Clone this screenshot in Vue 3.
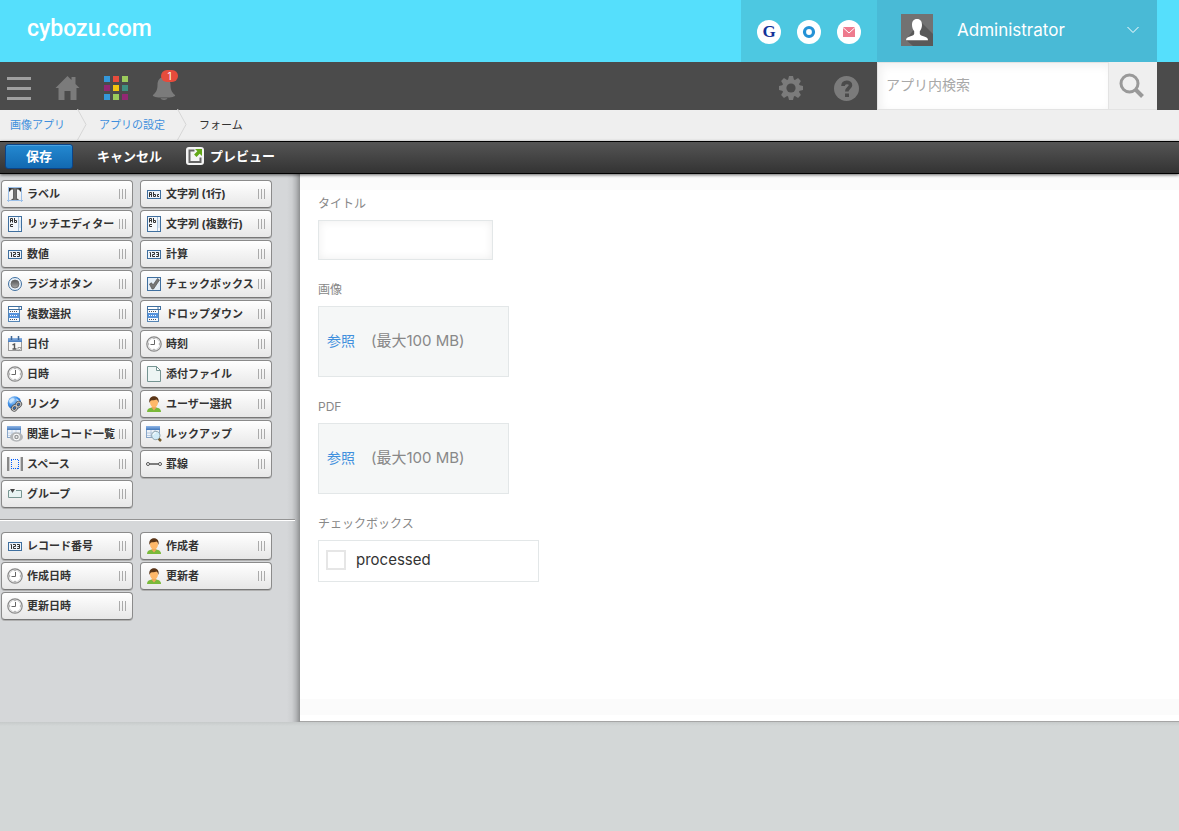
<script setup>
import { ref } from 'vue'

const appColors = ['#3498db', '#e74c3c', '#9ccb5c', '#932874', '#f1c40f', '#3f8f80', '#3498db', '#9ccb5c', '#932874']

const fieldParts = [
  { icon: 'label', name: 'ラベル' },
  { icon: 'abc', name: '文字列 (1行)' },
  { icon: 'multi', name: 'リッチエディター' },
  { icon: 'multi', name: '文字列 (複数行)' },
  { icon: 'num', name: '数値' },
  { icon: 'num', name: '計算' },
  { icon: 'radio', name: 'ラジオボタン' },
  { icon: 'check', name: 'チェックボックス' },
  { icon: 'list', name: '複数選択' },
  { icon: 'list', name: 'ドロップダウン' },
  { icon: 'date', name: '日付' },
  { icon: 'clock', name: '時刻' },
  { icon: 'clock', name: '日時' },
  { icon: 'file', name: '添付ファイル' },
  { icon: 'link', name: 'リンク' },
  { icon: 'user', name: 'ユーザー選択' },
  { icon: 'related', name: '関連レコード一覧' },
  { icon: 'lookup', name: 'ルックアップ' },
  { icon: 'space', name: 'スペース' },
  { icon: 'rule', name: '罫線' },
  { icon: 'group', name: 'グループ' },
]

const systemParts = [
  { icon: 'num', name: 'レコード番号' },
  { icon: 'user', name: '作成者' },
  { icon: 'clock', name: '作成日時' },
  { icon: 'user', name: '更新者' },
  { icon: 'clock', name: '更新日時' },
]

const palettes = [fieldParts, systemParts]
const attachments = ['画像', 'PDF']

const query = ref('')
const title = ref('')
const processed = ref(false)
</script>

<template>
  <div class="page">
    <svg class="defs" aria-hidden="true">
      <defs>
        <linearGradient id="g-gray" x1="0" y1="0" x2="0" y2="1">
          <stop offset="0" stop-color="#555" /><stop offset="1" stop-color="#aaa" />
        </linearGradient>
        <linearGradient id="g-blue" x1="0" y1="0" x2="0" y2="1">
          <stop offset="0" stop-color="#8fb6e6" /><stop offset="1" stop-color="#4379bd" />
        </linearGradient>
        <linearGradient id="g-tee" x1="0" y1="0" x2="1" y2="0">
          <stop offset="0" stop-color="#222" /><stop offset="0.5" stop-color="#777" /><stop offset="1" stop-color="#222" />
        </linearGradient>
        <radialGradient id="g-globe" cx="0.35" cy="0.3" r="0.8">
          <stop offset="0" stop-color="#bfe0ff" /><stop offset="0.5" stop-color="#3c8ee6" /><stop offset="1" stop-color="#0f4fae" />
        </radialGradient>
      </defs>
      <symbol id="i-label" viewBox="0 0 16 16">
        <path d="M1.500 1v15M14.500 1v15M0 14.500h16M1 1.500h14" stroke="#9bbfe8" fill="none" />
        <path d="M2 2h12v3.500h-1c-.3-1.500-1-2-3-2v8.500c0 .8.500 1 1.500 1v1h-7v-1c1 0 1.500-.2 1.500-1V3.500c-2 0-2.700.5-3 2H2z" fill="url(#g-tee)" />
      </symbol>
      <symbol id="i-abc" viewBox="0 0 16 16">
        <rect x="1.500" y="4.500" width="13" height="8" fill="#edf4fb" stroke="#3f6f9f" />
        <path d="M3.500 11V6.500h2V11M3.500 8.500h2M7.500 6v4.500h2v-2h-2M13 8.500h-1.500v2H13" fill="none" stroke="#333" />
      </symbol>
      <symbol id="i-num" viewBox="0 0 16 16">
        <rect x="1.500" y="4.500" width="13" height="8" fill="#edf4fb" stroke="#3f6f9f" />
        <path d="M3.500 6.500h1V11M6 6.500h2.500v2h-2v2H9M10 6.500h2.500v4H10M10.500 8.500h2" fill="none" stroke="#333" />
      </symbol>
      <symbol id="i-multi" viewBox="0 0 16 16">
        <rect x="1.500" y=".5" width="13" height="15" fill="#f4f8fc" stroke="#3f6f9f" />
        <path d="M11.500 1v14" stroke="#a9c2db" /><path d="M12 4h2v8h-2z" fill="#dbe7f3" />
        <path d="M3.500 6.500V2.500h2v4M3.500 4.500h2M7.500 2v4.500h2v-2h-2M6 8.500H3.500v2H6" fill="none" stroke="#333" />
      </symbol>
      <symbol id="i-radio" viewBox="0 0 16 16">
        <circle cx="8" cy="8" r="6.500" fill="#eaf2fa" stroke="#3f6f9f" />
        <circle cx="8" cy="8" r="4" fill="url(#g-gray)" stroke="#666" stroke-width=".8" />
      </symbol>
      <symbol id="i-check" viewBox="0 0 16 16">
        <rect x="1.500" y="1.500" width="13" height="13" fill="#e4eef8" stroke="#3f6f9f" />
        <path d="M3.500 8l2-1.200L7 9l4.500-6.500L13.500 4 7.500 13H6z" fill="#777" stroke="#555" stroke-width=".7" />
      </symbol>
      <symbol id="i-list" viewBox="0 0 16 16">
        <rect x="1.500" y="3.500" width="11" height="12" fill="#f4f9ff" stroke="#5585b5" />
        <path d="M2 7h10v5H2z" fill="#5593dd" />
        <rect x="1.500" y=".5" width="13" height="3" fill="#fff" stroke="#3f6f9f" />
        <path d="M12 1v3" stroke="#3f6f9f" />
        <path d="M3 5.500h8M3 13.500h8" stroke="#555" stroke-dasharray="1 1" />
        <path d="M3 9.500h8" stroke="#fff" stroke-dasharray="1 1" />
      </symbol>
      <symbol id="i-date" viewBox="0 0 16 16">
        <rect x="1.500" y="2.500" width="13" height="12" fill="#f6f6f6" stroke="#999" />
        <path d="M1 2h14v4H1z" fill="url(#g-blue)" />
        <path d="M4.500 0v4M11.500 0v4" stroke="#3d6694" stroke-width="1.500" />
        <path d="M5.500 8.800L7.500 8v5M5.500 13h4" stroke="#555" stroke-width="1.400" fill="none" />
        <path d="M11 15v-3.500h4z" fill="#fff" stroke="#888" stroke-width=".8" />
      </symbol>
      <symbol id="i-clock" viewBox="0 0 16 16">
        <circle cx="8" cy="8" r="7.200" fill="#f0f0f0" stroke="#888" stroke-width="1.200" />
        <circle cx="8" cy="8" r="5.800" fill="#fff" stroke="#ccc" stroke-width=".6" />
        <path d="M8.500 4v4.500H4.500" fill="none" stroke="#666" />
        <path d="M8 1.800v1.400M8 12.800v1.400M1.800 8h1.400M12.800 8h1.400" stroke="#888" />
      </symbol>
      <symbol id="i-file" viewBox="0 0 16 16">
        <path d="M1.500.5h9l4 4v11h-13z" fill="#edf5f4" stroke="#759492" />
        <path d="M10.500.5v4h4z" fill="#fff" stroke="#759492" />
      </symbol>
      <symbol id="i-link" viewBox="0 0 16 16">
        <circle cx="7.500" cy="7" r="6.800" fill="url(#g-globe)" />
        <path d="M2 4.500C4 1.500 7 2 7.500 3S5 5.500 4.500 7 2 7 2 4.500zM9 2.500l3.500 2L10 6z" fill="#d5ebff" opacity=".8" />
        <g fill="none" stroke="#555" stroke-width="2.600"><rect x="9" y="6.500" width="5" height="4" rx="2" transform="rotate(-48 11.500 8.500)" /><rect x="5" y="10" width="5" height="4" rx="2" transform="rotate(-48 7.500 12)" /></g>
        <g fill="none" stroke="#ccc"><rect x="9" y="6.500" width="5" height="4" rx="2" transform="rotate(-48 11.500 8.500)" /><rect x="5" y="10" width="5" height="4" rx="2" transform="rotate(-48 7.500 12)" /></g>
      </symbol>
      <symbol id="i-user" viewBox="0 0 16 16">
        <path d="M1 16c0-3 2-4 5-4.500h4c3 .5 5 1.500 5 4.500z" fill="#79b93a" />
        <path d="M5.500 11.500L8 14.500l2.500-3-1-2h-3z" fill="#f0a55a" />
        <ellipse cx="8" cy="6.500" rx="4" ry="4.800" fill="#ffb869" />
        <path d="M3.500 7C2.500 2.500 5 .2 8 .2S13.500 2.500 12.500 7C12 5 11.500 4 10.500 3.500 8.500 4.500 6 4 5 4.500 4.200 5 4 6 3.500 7z" fill="#5a3517" />
      </symbol>
      <symbol id="i-related" viewBox="0 0 16 16">
        <rect x=".5" y=".5" width="13" height="11" fill="#eef3f9" stroke="#8aa7c9" />
        <path d="M0 0h14v4H0z" fill="url(#g-blue)" />
        <path d="M1 7h12M1 9.500h12M5 4v7M9 4v7" stroke="#b6c9df" stroke-width=".7" />
        <ellipse cx="9.500" cy="11" rx="6.500" ry="4.700" fill="#b3b6b8" />
        <circle cx="9.500" cy="11" r="3.300" fill="#fff" /><circle cx="9.500" cy="11" r="2.300" fill="#96999b" /><circle cx="9.500" cy="11" r="1" fill="#eee" />
      </symbol>
      <symbol id="i-lookup" viewBox="0 0 16 16">
        <rect x=".5" y=".5" width="13" height="11" fill="#eef3f9" stroke="#8aa7c9" />
        <path d="M0 0h14v4H0z" fill="url(#g-blue)" />
        <path d="M1 7h12M1 9.500h12M5 4v7M9 4v7" stroke="#a0b9d6" stroke-width=".7" />
        <path d="M12.500 12.500l2.500 2.500" stroke="#755c2c" stroke-width="2.500" />
        <circle cx="9.800" cy="9.500" r="4.200" fill="#d2ecf8" stroke="#91a4ad" />
        <path d="M7 9c.3-1.500 1.500-2.300 3-2.300" fill="none" stroke="#fff" />
      </symbol>
      <symbol id="i-space" viewBox="0 0 16 16">
        <path d="M0 1h2v14H0zM14 1h2v14h-2z" fill="#888" /><path d="M2.500 1v14M13.500 1v14" stroke="#ccc" />
        <path d="M4 3.500h8M4 12.500h8M4.500 4v9M11.500 4v9" fill="none" stroke="#005eff" stroke-dasharray="1 1" />
      </symbol>
      <symbol id="i-rule" viewBox="0 0 16 16">
        <path d="M3 8h10" stroke="#555" stroke-width="1.500" />
        <circle cx="2" cy="8" r="1.500" fill="#fff" stroke="#555" /><circle cx="14" cy="8" r="1.500" fill="#fff" stroke="#555" />
      </symbol>
      <symbol id="i-group" viewBox="0 0 16 16">
        <path d="M3 4.500H1.500v7h13v-7H9" fill="#e8f4f3" stroke="#789692" />
        <path d="M3 3h5L5.500 7z" fill="#444" />
      </symbol>
    </svg>

    <header class="top">
      <a class="logo" href="#">cybozu.com</a>
      <nav class="services" aria-label="サービス">
        <a href="#" class="disc garoon" aria-label="Garoon">G</a>
        <a href="#" class="disc" aria-label="Office"><svg width="24" height="24"><circle cx="12" cy="12" r="4.500" fill="none" stroke="#2492d6" stroke-width="3.200" /></svg></a>
        <a href="#" class="disc" aria-label="Mailwise"><svg width="24" height="24"><path d="M6 7h12v10H6z" fill="#ee7b8e" /><path d="M6 7.500l6 5.500 6-5.500" fill="none" stroke="#fff" /></svg></a>
      </nav>
      <button class="account" type="button">
        <svg class="avatar" width="32" height="32" viewBox="0 0 32 32">
          <path d="M0 0h32v32H0z" fill="#727272" />
          <path d="M19 7l13 13v12H12l-7-6z" fill="#595959" />
          <path d="M16 5c3.500 0 5 2.500 5 6 0 2.500-1 5-2.200 6.300v2.500c0 1.200 1.500 1.700 3.700 2.400 3 .9 4.500 1.800 4.500 4H5c0-2.200 1.500-3.100 4.500-4 2.200-.7 3.700-1.200 3.700-2.400v-2.500C12 16 11 13.500 11 11c0-3.500 1.500-6 5-6z" fill="#fff" />
        </svg>
        <span class="account-name">Administrator</span>
        <svg width="12" height="8" viewBox="0 0 12 8"><path d="M.5 1L6 6.500 11.500 1" fill="none" stroke="#fff" /></svg>
      </button>
    </header>

    <div class="nav">
      <button class="icon-btn menu" type="button" aria-label="メニュー"><i></i><i></i><i></i></button>
      <a class="icon-btn" href="#" aria-label="ホーム">
        <svg width="25" height="24"><path d="M12.500 0l4 4V1h4v7l4 4h-3v12h-6v-9h-6v9h-6V12h-3z" fill="#7b7b7b" /></svg>
      </a>
      <button class="icon-btn apps" type="button" aria-label="アプリ"><i v-for="(c, n) in appColors" :key="n" :style="{ background: c }"></i></button>
      <button class="icon-btn bell" type="button" aria-label="通知">
        <svg width="24" height="24"><path d="M12 1c4 0 6.500 3 6.500 8 0 4.500 1 7 4.500 10 .8 1-1.500 2.500-11 2.500S.2 20 1 19C4.500 16 5.500 13.500 5.500 9c0-5 2.500-8 6.500-8zM8.500 22.300h7c-1 2.200-6 2.200-7 0z" fill="#7b7b7b" /></svg>
        <span class="badge">1</span>
      </button>
      <div class="nav-right">
        <button class="icon-btn" type="button" aria-label="設定">
          <svg width="24" height="24" viewBox="-12 -12 24 24">
            <g fill="#7b7b7b"><path v-for="a in [0, 45, 90, 135]" :key="a" d="M-2-12h4l1 4v16l-1 4h-4l-1-4V-8z" :transform="`rotate(${a})`" /><circle r="9" /></g>
            <circle r="4.600" fill="#4b4b4b" />
          </svg>
        </button>
        <button class="icon-btn" type="button" aria-label="ヘルプ">
          <svg width="25" height="25"><circle cx="12.500" cy="12.500" r="12.500" fill="#7b7b7b" /><path d="M9 10c0-4.800 7.500-4.600 7.500-.8 0 2.800-3.700 2.600-3.700 6.300" fill="none" stroke="#4b4b4b" stroke-width="3.600" /><path d="M11 17.500h4V21h-4z" fill="#4b4b4b" /></svg>
        </button>
      </div>
      <form class="search" @submit.prevent>
        <input v-model="query" type="text" placeholder="アプリ内検索" aria-label="アプリ内検索" />
        <button type="submit" aria-label="検索">
          <svg width="26" height="26"><circle cx="10.500" cy="10.500" r="8.500" fill="none" stroke="#999" stroke-width="3" /><path d="M16.500 16.500l7 7" stroke="#999" stroke-width="4" /></svg>
        </button>
      </form>
    </div>

    <nav class="crumbs" aria-label="パンくず">
      <a href="#">画像アプリ</a>
      <svg width="10" height="31"><path d="M.5 0l8.500 15.500L.5 31" fill="none" stroke="#d6d6d6" /></svg>
      <a href="#">アプリの設定</a>
      <svg width="10" height="31"><path d="M.5 0l8.500 15.500L.5 31" fill="none" stroke="#d6d6d6" /></svg>
      <span>フォーム</span>
    </nav>

    <div class="toolbar">
      <button class="save" type="button">保存</button>
      <button class="plain" type="button">キャンセル</button>
      <button class="plain preview" type="button">
        <svg width="18" height="18">
          <rect width="18" height="18" rx="3" fill="#f4f4f4" />
          <path d="M8.500 3.500H3.500v11.500h11V10.500" fill="none" stroke="#666" stroke-width="2" />
          <path d="M9 2h7v7l-2.300-2.300-3.200 3.200-2.400-2.400 3.200-3.200z" fill="#62a818" />
        </svg>
        プレビュー
      </button>
    </div>

    <div class="workspace">
      <aside class="side">
        <template v-for="(parts, p) in palettes" :key="p">
          <hr v-if="p" />
          <div class="palette">
            <button v-for="part in parts" :key="part.name" class="part" type="button">
              <svg width="16" height="16"><use :href="'#i-' + part.icon" /></svg>
              <span>{{ part.name }}</span>
              <i class="grip"></i>
            </button>
          </div>
        </template>
      </aside>

      <main class="canvas">
        <div class="field">
          <label for="f-title">タイトル</label>
          <input id="f-title" v-model="title" class="text" type="text" />
        </div>
        <div v-for="name in attachments" :key="name" class="field">
          <span class="name">{{ name }}</span>
          <div class="upload"><a href="#">参照</a><span>(最大100 MB)</span></div>
        </div>
        <div class="field">
          <span class="name">チェックボックス</span>
          <div class="checks">
            <input id="f-processed" v-model="processed" type="checkbox" />
            <label for="f-processed">processed</label>
          </div>
        </div>
      </main>
    </div>
    <footer class="foot"></footer>
  </div>
</template>

<style>
body { margin: 0; }
</style>

<style scoped>
.page {
  display: flex;
  flex-direction: column;
  min-height: 100vh;
  font-family: Inter, "Noto Sans CJK JP", sans-serif;
  color: #333;
  background: #d3d7d7;
}
.page *, .page *::before, .page *::after { box-sizing: border-box; }
.defs { position: absolute; width: 0; height: 0; }
svg { display: block; flex: none; }
button, input { font: inherit; color: inherit; margin: 0; padding: 0; border: 0; background: none; border-radius: 0; }
a { color: #3f8fdd; text-decoration: none; }

.top { display: flex; height: 62px; padding-right: 22px; background: #55dffc; }
.top .logo { margin: 13px auto 0 27px; font: 500 23px/32px Roboto, sans-serif; color: #fff; }
.services { display: flex; gap: 16px; padding: 20px 16px 0; background: #4dc8e1; }
.disc { display: block; width: 24px; height: 24px; border-radius: 50%; background: #fff; }
.garoon { font: bold 17px/24px "Liberation Serif", serif; color: #12339a; text-align: center; }
.account { display: flex; align-items: center; width: 280px; padding: 0 18px 2px 24px; background: #49bad6; color: #fff; }
.account-name { flex: 1; margin-left: 24px; font-size: 17px; line-height: 24px; text-align: left; }

.nav { display: flex; align-items: center; gap: 24px; height: 48px; padding: 0 22px 0 7px; background: #4b4b4b; }
.icon-btn { display: block; flex: none; position: relative; margin-top: 4px; }
.menu { display: grid; gap: 7px; width: 24px; }
.menu i { height: 3px; background: #a0a0a0; }
.apps { display: grid; grid-template-columns: repeat(3, 6px); gap: 3px; width: 24px; }
.apps i { height: 6px; }
.badge {
  position: absolute; top: -6px; left: 9px; width: 17px; height: 12px;
  border-radius: 6px; background: #e74c3c; color: #fff; font-size: 10px; line-height: 12px; text-align: center;
}
.nav-right { display: flex; gap: 31px; margin-left: auto; margin-right: -6px; }
.search { display: flex; align-self: stretch; width: 280px; }
.search input {
  flex: 1; min-width: 0; padding: 0 8px 2px; font-size: 14px; line-height: 20px;
  border: 1px solid #e3e3e3; background: #fff; box-shadow: inset 3px 3px 10px #f0f0f0;
}
.search input::placeholder { color: #a8a8a8; opacity: 1; }
.search button { display: grid; place-items: center; width: 48px; padding-right: 2px; background: #efefef; border-bottom: 1px solid #e3e3e3; }

.crumbs { display: flex; align-items: center; height: 31px; padding: 0 10px 2px; background: #efefef; font-size: 11px; line-height: 16px; }
.crumbs svg { margin: 0 12px 0 12px; }

.toolbar {
  display: flex; align-items: center; position: relative; height: 33px; padding-left: 5px; padding-bottom: 2px;
  border-top: 1px solid #000; border-bottom: 1px solid #000;
  background: linear-gradient(#555, #333); box-shadow: 0 1px 3px rgba(0, 0, 0, 0.6);
  color: #fff; font-size: 13px; font-weight: 700; line-height: 18px;
}
.save { width: 68px; height: 25px; padding-bottom: 2px; border: 1px solid #0b4488; border-radius: 3px; background: linear-gradient(#2489d1, #1269b1); box-shadow: inset 0 1px 0 #4ba2de; }
.plain { margin-left: 24px; padding-bottom: 1px; }
.preview { display: flex; align-items: center; gap: 6px; }

.workspace { display: flex; flex: 1; background: #fff; }
.side {
  flex: none; width: 300px; padding: 6px 0 6px;
  background: linear-gradient(to left, #8e9091, #b5b7b9 4px, #cdcfd1 8px, #d5d7d9 13px);
}
.side hr { height: 2px; margin: 11px 5px 11px 0; border: 0; border-top: 1px solid #939393; background: #fff; }
.palette { display: grid; grid-template-columns: 132px 132px; gap: 2px 7px; padding-left: 1px; }
.part {
  display: flex; align-items: center; gap: 4px; height: 28px; padding: 0 6px 0 5px;
  border: 1px solid #8b8b8b; border-bottom-color: #777; border-radius: 4px;
  background: linear-gradient(#fff, #e7e7e7); box-shadow: 0 1px 0 #b0b0b0, inset 0 1px 0 #fff;
  font-size: 11px; font-weight: 700; line-height: 16px; white-space: nowrap;
}
.grip { flex: none; width: 7px; height: 10px; margin-left: auto; background: repeating-linear-gradient(to right, #aaa 0 1px, transparent 1px 3px); }

.canvas {
  flex: 1; display: flex; flex-direction: column; align-items: flex-start; gap: 20px; padding: 20px 18px;
  border-bottom: 1px solid #a5a5a5;
  background:
    linear-gradient(#fbfbfb, #fbfbfb) top / 100% 16px no-repeat,
    linear-gradient(#fbfbfb, #fbfbfb) 0 calc(100% - 6px) / 100% 16px no-repeat, #fff;
}
.field { display: flex; flex-direction: column; align-items: flex-start; gap: 6px; }
.field > label, .name { font-size: 12px; line-height: 20px; color: #888; }
.text { width: 175px; height: 40px; padding: 0 8px; font-size: 14px; border: 1px solid #e3e7e8; box-shadow: inset 0 0 10px #eee; }
.upload {
  display: flex; align-items: center; gap: 16px; width: 191px; height: 71px; padding: 0 8px 2px;
  border: 1px solid #e3e7e8; background: #f5f7f7; color: #888; font-size: 15px; line-height: 20px;
}
.upload a { font-size: 14px; }
.checks { display: flex; align-items: center; gap: 10px; width: 221px; height: 42px; padding: 0 7px 2px; border: 1px solid #e3e7e8; }
.checks input { appearance: none; width: 20px; height: 20px; border: 2px solid #e6e6e6; background: #fff; }
.checks input:checked { background: #3f8fdd; }
.checks label { font-size: 15px; line-height: 20px; }

.foot { height: 109px; background: linear-gradient(#c6caca, #d3d7d7 4px); }
</style>
